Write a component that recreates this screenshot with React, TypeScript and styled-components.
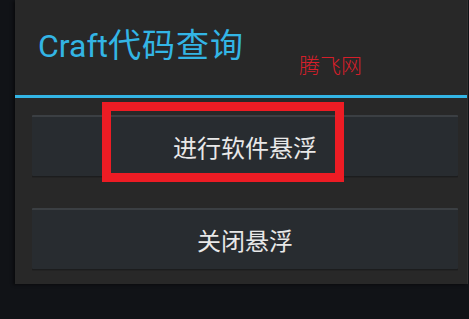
import React from "react";
import styled, { createGlobalStyle } from "styled-components";

const Global = createGlobalStyle`
  html, body {
    margin: 0;
    padding: 0;
    background: #111317;
    width: 469px;
    height: 319px;
    overflow: hidden;
  }
  * { box-sizing: border-box; }
`;

const Screen = styled.div`
  position: relative;
  width: 469px;
  height: 319px;
  background: #111317;
  padding-left: 15px;
  padding-right: 1px;
`;

const Dialog = styled.div`
  width: 453px;
  height: 284px;
  background: #282828;
  border-right: 1px solid #303030;
  box-shadow: -2px 1px 3px rgba(0, 0, 0, 0.45);
  display: flex;
  flex-direction: column;
`;

const Header = styled.div`
  height: 98px;
  padding: 27px 0 0 23px;
  border-bottom: 3px solid #33b5e5;
`;

const Title = styled.h1`
  margin: 0;
  font-family: Roboto, "Noto Sans CJK SC", sans-serif;
  font-weight: 400;
  font-size: 32px;
  line-height: 38px;
  color: #33b5e5;
`;

const TitleCjk = styled.span`
  font-size: 33px;
  letter-spacing: 1px;
`;

const Body = styled.div`
  display: flex;
  flex-direction: column;
  gap: 32px;
  padding: 17px 9px 0 17px;
`;

const Button = styled.button`
  height: 61px;
  width: 100%;
  display: flex;
  align-items: center;
  justify-content: center;
  background: #282c30;
  border: none;
  border-top: 2px solid #3b3f43;
  border-radius: 1px;
  box-shadow: 0 1px 0 #1c1d1e, 0 2px 0 #232323;
  color: #e8e8e8;
  font-family: "Noto Sans CJK SC", sans-serif;
  font-size: 24px;
  padding: 0;
  padding-bottom: 1px;
`;

const Watermark = styled.div`
  position: absolute;
  left: 299px;
  top: 54px;
  font-family: "Noto Sans CJK SC", sans-serif;
  font-weight: 300;
  font-size: 21px;
  line-height: 1;
  color: #d61f2a;
`;

const Highlight = styled.div`
  position: absolute;
  left: 102px;
  top: 102px;
  width: 242px;
  height: 80px;
  border: 9px solid #ed1c24;
`;

export default function App() {
  return (
    <>
      <Global />
      <Screen>
        <Dialog>
          <Header>
            <Title>
              Craft<TitleCjk>代码查询</TitleCjk>
            </Title>
          </Header>
          <Body>
            <Button>进行软件悬浮</Button>
            <Button>关闭悬浮</Button>
          </Body>
        </Dialog>
        <Watermark>腾飞网</Watermark>
        <Highlight />
      </Screen>
    </>
  );
}
